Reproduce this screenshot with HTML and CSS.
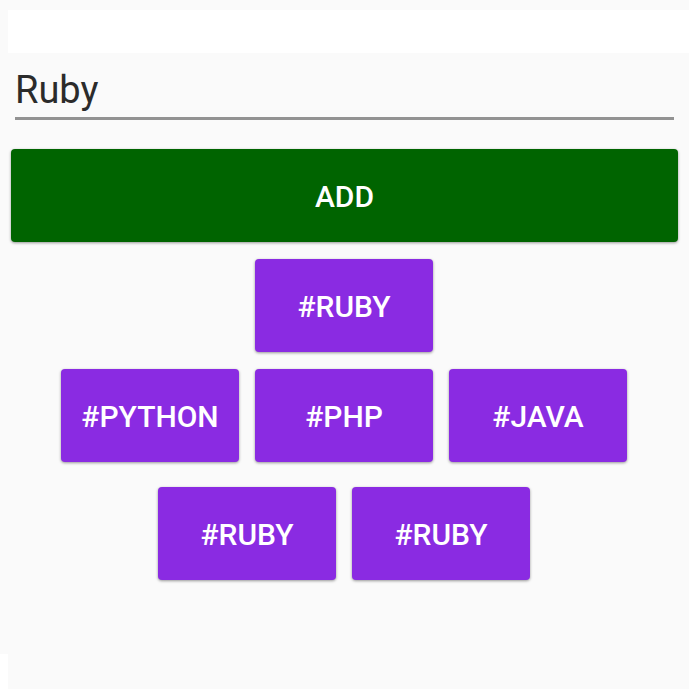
FILE: index.html
```
<!DOCTYPE html>
<html lang="en">
<head>
<meta charset="utf-8">
<title>Tags</title>
<link rel="stylesheet" href="styles.css">
</head>
<body>
<div class="gutter"></div>
<main class="screen">
  <header class="band"></header>
  <form class="form">
    <input class="field" type="text" value="Ruby" aria-label="Tag">
    <button class="button add" type="button">ADD</button>
  </form>
  <section class="tags">
    <div class="row"><button class="button tag" type="button">#RUBY</button></div>
    <div class="row">
      <button class="button tag" type="button">#PYTHON</button>
      <button class="button tag" type="button">#PHP</button>
      <button class="button tag" type="button">#JAVA</button>
    </div>
    <div class="row last">
      <button class="button tag" type="button">#RUBY</button>
      <button class="button tag" type="button">#RUBY</button>
    </div>
  </section>
</main>
</body>
</html>
```
FILE: styles.css
```
* {
  box-sizing: border-box;
}

body {
  display: flex;
  min-height: 100vh;
  margin: 0;
  background: #fafafa;
  font-family: Roboto, "Liberation Sans", sans-serif;
}

.gutter {
  flex: none;
  width: 8px;
  border-bottom: 35px solid #fff;
}

.screen {
  flex: 1;
  min-width: 0;
  padding-top: 10px;
}

.band {
  height: 43px;
  background: #fff;
}

.form {
  display: flex;
  flex-direction: column;
  padding: 11px 11px 0 3px;
}

.field {
  height: 56px;
  margin: 0 4px;
  padding: 0 0 1px;
  border: 0;
  border-bottom: 3px solid #929292;
  border-radius: 0;
  outline: 0;
  background: transparent;
  color: #2b2b2b;
  font: 400 38px/50px Roboto, "Liberation Sans", sans-serif;
}

.button {
  height: 93px;
  padding: 3px 0 0;
  border: 0;
  border-radius: 4px;
  color: #fff;
  font: 500 30px/34px Roboto, "Liberation Sans", sans-serif;
  box-shadow: 0 1px 3px rgba(0, 0, 0, 0.4);
}

.add {
  margin-top: 29px;
  background: #006400;
}

.tags {
  display: flex;
  flex-direction: column;
  gap: 17px;
  padding: 17px 17px 0 8px;
}

.row {
  display: flex;
  justify-content: center;
  gap: 16px;
}

.last {
  margin-top: 8px;
}

.tag {
  width: 178px;
  background: #8a2be2;
}
```
